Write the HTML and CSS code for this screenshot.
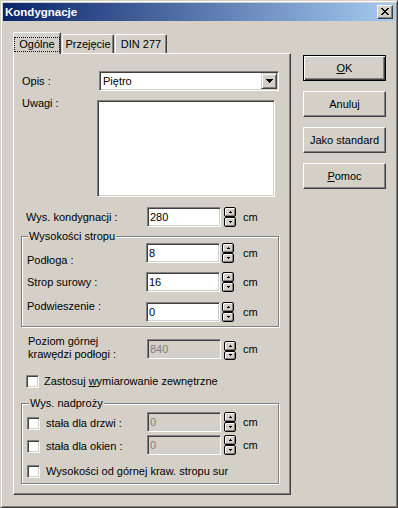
FILE: index.html
```html
<!DOCTYPE html>
<html lang="pl">
<head>
<meta charset="utf-8">
<title>Kondygnacje</title>
<link rel="stylesheet" href="styles.css">
</head>
<body>
<div class="win">
  <div class="titlebar">
    <span class="title">Kondygnacje</span>
    <span class="close">
      <svg width="8" height="7" viewBox="0 0 8 7" shape-rendering="crispEdges">
        <rect x="0" y="0" width="2" height="1"/><rect x="6" y="0" width="2" height="1"/>
        <rect x="1" y="1" width="2" height="1"/><rect x="5" y="1" width="2" height="1"/>
        <rect x="2" y="2" width="4" height="1"/>
        <rect x="3" y="3" width="2" height="1"/>
        <rect x="2" y="4" width="4" height="1"/>
        <rect x="1" y="5" width="2" height="1"/><rect x="5" y="5" width="2" height="1"/>
        <rect x="0" y="6" width="2" height="1"/><rect x="6" y="6" width="2" height="1"/>
      </svg>
    </span>
  </div>

  <div class="main">
    <div class="left">
      <div class="tabstrip">
        <div class="tab sel"><span class="focus">Ogólne</span></div>
        <div class="tab t2">Przejęcie</div>
        <div class="tab t3">DIN 277</div>
      </div>

      <div class="panel">
        <div class="row r-opis">
          <span class="lbl w-opis">Opis :</span>
          <div class="combo sunk">
            <span class="ctext">Piętro</span>
            <span class="dd">
              <svg width="7" height="4" viewBox="0 0 7 4" shape-rendering="crispEdges">
                <rect x="0" y="0" width="7" height="1"/><rect x="1" y="1" width="5" height="1"/>
                <rect x="2" y="2" width="3" height="1"/><rect x="3" y="3" width="1" height="1"/>
              </svg>
            </span>
          </div>
        </div>

        <div class="row r-uwagi">
          <span class="lbl w-uwagi">Uwagi :</span>
          <div class="memo sunk"></div>
        </div>

        <div class="row r-wys">
          <span class="lbl w-wys">Wys. kondygnacji :</span>
          <div class="edit sunk">280</div>
          <div class="spin sp3">
            <span class="sb"><svg width="3" height="2" viewBox="0 0 3 2" shape-rendering="crispEdges"><rect x="1" y="0" width="1" height="1"/><rect x="0" y="1" width="3" height="1"/></svg></span>
            <span class="sb"><svg width="3" height="2" viewBox="0 0 3 2" shape-rendering="crispEdges"><rect x="0" y="0" width="3" height="1"/><rect x="1" y="1" width="1" height="1"/></svg></span>
          </div>
          <span class="unit">cm</span>
        </div>

        <div class="group g1">
          <div class="gtitle gt1">Wysokości stropu</div>
          <div class="row r-podloga">
            <span class="lbl w-g1">Podłoga :</span>
            <div class="edit sunk">8</div>
            <div class="spin sp2">
              <span class="sb"><svg width="3" height="2" viewBox="0 0 3 2" shape-rendering="crispEdges"><rect x="1" y="0" width="1" height="1"/><rect x="0" y="1" width="3" height="1"/></svg></span>
              <span class="sb"><svg width="3" height="2" viewBox="0 0 3 2" shape-rendering="crispEdges"><rect x="0" y="0" width="3" height="1"/><rect x="1" y="1" width="1" height="1"/></svg></span>
            </div>
            <span class="unit u9">cm</span>
          </div>
          <div class="row r-strop">
            <span class="lbl w-g1">Strop surowy :</span>
            <div class="edit sunk">16</div>
            <div class="spin sp2">
              <span class="sb"><svg width="3" height="2" viewBox="0 0 3 2" shape-rendering="crispEdges"><rect x="1" y="0" width="1" height="1"/><rect x="0" y="1" width="3" height="1"/></svg></span>
              <span class="sb"><svg width="3" height="2" viewBox="0 0 3 2" shape-rendering="crispEdges"><rect x="0" y="0" width="3" height="1"/><rect x="1" y="1" width="1" height="1"/></svg></span>
            </div>
            <span class="unit u9">cm</span>
          </div>
          <div class="row r-podw">
            <span class="lbl w-g1">Podwieszenie :</span>
            <div class="edit sunk">0</div>
            <div class="spin sp2">
              <span class="sb"><svg width="3" height="2" viewBox="0 0 3 2" shape-rendering="crispEdges"><rect x="1" y="0" width="1" height="1"/><rect x="0" y="1" width="3" height="1"/></svg></span>
              <span class="sb"><svg width="3" height="2" viewBox="0 0 3 2" shape-rendering="crispEdges"><rect x="0" y="0" width="3" height="1"/><rect x="1" y="1" width="1" height="1"/></svg></span>
            </div>
            <span class="unit u9">cm</span>
          </div>
        </div>

        <div class="row r-poziom">
          <span class="lbl w-poziom">Poziom górnej<br>krawędzi podłogi :</span>
          <div class="edit sunk dis">840</div>
          <div class="spin sp3 spdown">
            <span class="sb"><svg width="3" height="2" viewBox="0 0 3 2" shape-rendering="crispEdges"><rect x="1" y="0" width="1" height="1"/><rect x="0" y="1" width="3" height="1"/></svg></span>
            <span class="sb"><svg width="3" height="2" viewBox="0 0 3 2" shape-rendering="crispEdges"><rect x="0" y="0" width="3" height="1"/><rect x="1" y="1" width="1" height="1"/></svg></span>
          </div>
          <span class="unit">cm</span>
        </div>

        <div class="row r-zast">
          <span class="chk sunk"></span>
          <span class="ctxt">Zastosuj <u>w</u>ymiarowanie zewnętrzne</span>
        </div>

        <div class="group g2">
          <div class="gtitle gt2">Wys. nadproży</div>
          <div class="row r-drzwi">
            <span class="clabel"><span class="chk sunk"></span><span class="ctxt2">stała dla drzwi :</span></span>
            <div class="edit sunk dis">0</div>
            <div class="spin sp3">
              <span class="sb"><svg width="3" height="2" viewBox="0 0 3 2" shape-rendering="crispEdges"><rect x="1" y="0" width="1" height="1"/><rect x="0" y="1" width="3" height="1"/></svg></span>
              <span class="sb"><svg width="3" height="2" viewBox="0 0 3 2" shape-rendering="crispEdges"><rect x="0" y="0" width="3" height="1"/><rect x="1" y="1" width="1" height="1"/></svg></span>
            </div>
            <span class="unit">cm</span>
          </div>
          <div class="row r-okien">
            <span class="clabel"><span class="chk sunk"></span><span class="ctxt2">stała dla okien :</span></span>
            <div class="edit sunk dis">0</div>
            <div class="spin sp3">
              <span class="sb"><svg width="3" height="2" viewBox="0 0 3 2" shape-rendering="crispEdges"><rect x="1" y="0" width="1" height="1"/><rect x="0" y="1" width="3" height="1"/></svg></span>
              <span class="sb"><svg width="3" height="2" viewBox="0 0 3 2" shape-rendering="crispEdges"><rect x="0" y="0" width="3" height="1"/><rect x="1" y="1" width="1" height="1"/></svg></span>
            </div>
            <span class="unit">cm</span>
          </div>
          <div class="row r-gorn">
            <span class="chk sunk"></span>
            <span class="ctxt2">Wysokości od górnej kraw. stropu sur</span>
          </div>
        </div>
      </div>
    </div>

    <div class="right">
      <div class="btn def"><span><u>O</u>K</span></div>
      <div class="btn">Anuluj</div>
      <div class="btn">Jako standard</div>
      <div class="btn"><span><u>P</u>omoc</span></div>
    </div>
  </div>
</div>
</body>
</html>
```

FILE: styles.css
```css
html, body {
  margin: 0;
  padding: 0;
  background: #D4D0C8;
}
body {
  font-family: "Liberation Sans", Arial, sans-serif;
  font-size: 11px;
  color: #000;
}
u { text-decoration: underline; text-underline-offset: 1px; }

.win {
  width: 398px;
  height: 508px;
  box-sizing: border-box;
  border: 1px solid;
  border-color: #D4D0C8 #404040 #404040 #D4D0C8;
  box-shadow: inset 1px 1px #fff, inset -1px -1px #808080;
  padding: 2px;
  background: #D4D0C8;
}

/* title bar */
.titlebar {
  height: 18px;
  display: flex;
  align-items: center;
  justify-content: space-between;
  padding: 0 2px;
  background: linear-gradient(to right, #0A246A, #A6CAF0);
}
.title {
  color: #fff;
  font-weight: bold;
  font-size: 11.5px;
  line-height: 18px;
}
.close {
  width: 16px;
  height: 14px;
  box-sizing: border-box;
  border: 1px solid;
  border-color: #fff #404040 #404040 #fff;
  box-shadow: inset -1px -1px #808080;
  background: #D4D0C8;
  display: flex;
  align-items: center;
  justify-content: center;
  padding: 0 1px 1px 0;
}
.close svg { fill: #000; display: block; }

/* main layout */
.main {
  display: flex;
  padding: 11px 0 0 10px;
}
.left { width: 278px; }
.right {
  margin: 23px 0 0 12px;
  display: flex;
  flex-direction: column;
  gap: 10px;
}

/* tabs */
.tabstrip {
  height: 22px;
  display: flex;
  align-items: flex-end;
}
.tab {
  height: 19px;
  margin-bottom: 1px;
  box-sizing: border-box;
  border: 1px solid;
  border-color: #fff #404040 transparent #fff;
  border-bottom: none;
  border-radius: 2px 2px 0 0;
  box-shadow: inset -1px 0 #808080;
  padding-top: 3px;
  line-height: 13px;
  text-align: center;
  background: #D4D0C8;
}
.tab.sel {
  width: 48px;
  height: 22px;
  margin-bottom: 0;
  padding-top: 4px;
  position: relative;
  z-index: 1;
}
.tab.t2 { width: 52px; margin-left: 1px; }
.tab.t3 { width: 52px; margin-left: 1px; }
.focus {
  display: inline-block;
  line-height: 11px;
  padding: 1px 4px;
  border: 1px dotted #000;
}

.panel {
  height: 442px;
  margin-top: -1px;
  box-sizing: border-box;
  border: 1px solid;
  border-color: #fff #404040 #404040 #fff;
  box-shadow: inset -1px -1px #808080;
  display: flex;
  flex-direction: column;
}

/* generic controls */
.sunk {
  box-sizing: border-box;
  border: 1px solid;
  border-color: #808080 #fff #fff #808080;
  box-shadow: inset 1px 1px #404040, inset -1px -1px #D4D0C8;
  background: #fff;
}
.row {
  display: flex;
  align-items: flex-start;
  height: 20px;
}
.lbl {
  line-height: 13px;
  flex: none;
}
.edit {
  width: 74px;
  height: 20px;
  padding-left: 2px;
  line-height: 18px;
  flex: none;
}
.edit.dis {
  background: #D4D0C8;
  color: #808080;
}
.spin {
  width: 12px;
  height: 20px;
  display: flex;
  flex-direction: column;
  flex: none;
}
.sp3 { margin-left: 3px; }
.sp2 { margin-left: 2px; }
.spdown { margin-top: 2px; height: 19px; }
.sb {
  flex: 1;
  box-sizing: border-box;
  border: 1px solid #000;
  border-radius: 2px;
  background: #D4D0C8;
  box-shadow: inset 1px 1px #fff, inset -1px -1px #808080;
  display: flex;
  align-items: center;
  justify-content: center;
}
.sb svg { display: block; fill: #000; }
.unit {
  margin-left: 7px;
  line-height: 20px;
}
.unit.u9 { margin-left: 9px; }

.chk {
  width: 13px;
  height: 13px;
  flex: none;
}

/* rows */
.r-opis { margin: 17px 0 0 8px; align-items: center; }
.w-opis { width: 77px; }
.combo {
  width: 180px;
  height: 20px;
  padding: 1px;
  display: flex;
  align-items: center;
  justify-content: space-between;
}
.ctext { margin-left: 2px; line-height: 16px; }
.dd {
  width: 16px;
  height: 16px;
  box-sizing: border-box;
  border: 1px solid;
  border-color: #D4D0C8 #404040 #404040 #D4D0C8;
  box-shadow: inset 1px 1px #fff, inset -1px -1px #808080;
  background: #D4D0C8;
  display: flex;
  align-items: center;
  justify-content: center;
}
.dd svg { display: block; fill: #000; }

.r-uwagi { margin: 9px 0 0 8px; height: 97px; }
.w-uwagi { width: 75px; margin-top: -3px; }
.memo { width: 178px; height: 97px; }

.r-wys { margin: 10px 0 0 12px; }
.w-wys { width: 121px; margin-top: 4px; }

/* group boxes */
.group {
  width: 258px;
  box-sizing: border-box;
  border: 1px solid #808080;
  box-shadow: inset 1px 1px #fff, 1px 1px #fff;
  display: flex;
  flex-direction: column;
  margin-left: 7px;
}
.gtitle {
  align-self: flex-start;
  margin-top: -7px;
  padding: 0 1px;
  line-height: 13px;
  background: #D4D0C8;
}
.gt1 { margin-left: 6px; }
.gt2 { margin-left: 7px; }

.g1 { margin-top: 9px; height: 91px; }
.g1 .row { margin-left: 5px; }
.w-g1 { width: 119px; }
.r-podloga .lbl { margin-top: 11px; }
.r-strop { margin-top: 9px; }
.r-strop .lbl { margin-top: 4px; }
.r-podw { margin-top: 10px; }
.r-podw .lbl { margin-top: -2px; }

.r-poziom { margin: 12px 0 0 14px; }
.w-poziom { width: 119px; margin-top: -4px; }

.r-zast { margin: 16px 0 0 12px; height: 13px; align-items: center; }
.ctxt { margin-left: 5px; line-height: 13px; }

.g2 { margin-top: 15px; height: 81px; }
.g2 .row { margin-left: 5px; }
.clabel {
  width: 120px;
  height: 13px;
  margin-top: 5px;
  display: flex;
  align-items: center;
  flex: none;
}
.ctxt2 { margin-left: 6px; line-height: 13px; white-space: nowrap; }
.r-drzwi { margin-top: 2px; }
.r-okien { margin-top: 3px; }
.r-gorn { margin-top: 10px; height: 13px; align-items: center; }

/* buttons */
.btn {
  width: 83px;
  height: 26px;
  box-sizing: border-box;
  border: 1px solid;
  border-color: #fff #404040 #404040 #fff;
  box-shadow: inset -1px -1px #808080;
  background: #D4D0C8;
  display: flex;
  align-items: center;
  justify-content: center;
  line-height: 13px;
}
.btn.def {
  border-color: #000;
  box-shadow: inset 1px 1px #fff, inset -1px -1px #404040, inset -2px -2px #808080;
}
```
